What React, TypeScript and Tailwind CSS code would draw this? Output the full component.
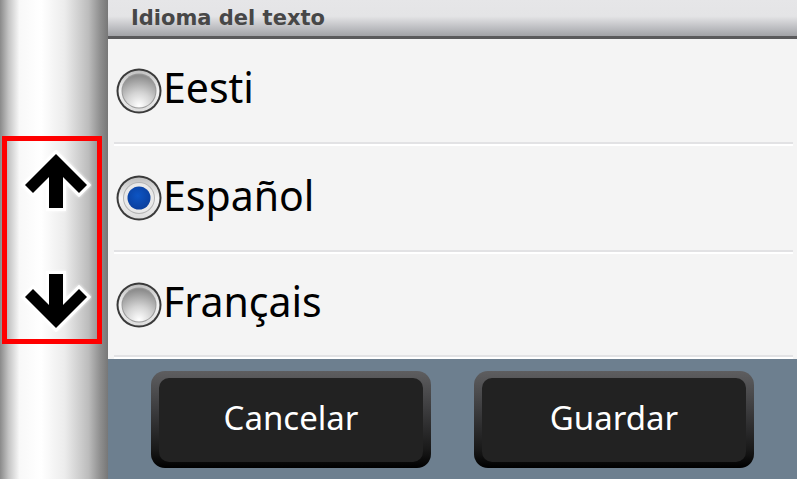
import React from 'react';

const languages = [
  { label: 'Eesti', selected: false, rowClass: 'h-[103px]' },
  { label: 'Español', selected: true, rowClass: 'h-[104px]' },
  { label: 'Français', selected: false, rowClass: 'h-[101px]' },
];

function Radio({ selected, id }: { selected: boolean; id: string }) {
  return (
    <svg width="46" height="46" viewBox="0 0 46 46" className="shrink-0">
      <defs>
        <linearGradient id={`ring-${id}`} x1="0" y1="0" x2="0" y2="1">
          <stop offset="0" stopColor="#bfbfbf" />
          <stop offset="0.5" stopColor="#f4f4f4" />
          <stop offset="1" stopColor="#dcdcdc" />
        </linearGradient>
        <radialGradient id={`ball-${id}`} cx="0.5" cy="0.95" r="0.9">
          <stop offset="0" stopColor="#ffffff" />
          <stop offset="0.45" stopColor="#d4d4d4" />
          <stop offset="1" stopColor="#8e8e8e" />
        </radialGradient>
        <radialGradient id={`dot-${id}`} cx="0.45" cy="0.4" r="0.6">
          <stop offset="0" stopColor="#0d55c4" />
          <stop offset="1" stopColor="#0a3f9e" />
        </radialGradient>
      </defs>
      <circle cx="23" cy="23" r="22.5" fill="#3a3a3a" />
      <circle cx="23" cy="23" r="20.5" fill={`url(#ring-${id})`} />
      {selected ? (
        <>
          <circle cx="23" cy="23" r="16" fill="#b5b5b5" />
          <circle cx="23" cy="23" r="15" fill="#e9e9e9" />
          <circle cx="23" cy="23" r="11.5" fill={`url(#dot-${id})`} />
        </>
      ) : (
        <>
          <circle cx="23" cy="23" r="17.5" fill="#9a9a9a" />
          <circle cx="23" cy="23" r="16.5" fill={`url(#ball-${id})`} />
        </>
      )}
    </svg>
  );
}

function Arrow({ down }: { down?: boolean }) {
  return (
    <svg width="72" height="64" viewBox="0 0 72 64" className={down ? 'rotate-180' : ''}>
      <polygon
        points="36,4 67,35 59,43 43,27 43,58 29,58 29,27 13,43 5,35"
        fill="#000"
        stroke="#fff"
        strokeWidth="6"
        strokeLinejoin="miter"
        paintOrder="stroke"
        style={{ filter: 'drop-shadow(0 0 1.5px #fff)' }}
      />
    </svg>
  );
}

export default function App() {
  return (
    <div className="w-[797px] h-[479px] flex overflow-hidden font-['Noto_Sans',sans-serif]">
      {/* Scroll rail */}
      <div className="w-[108px] h-full flex items-center justify-start pl-[2px] bg-[linear-gradient(to_right,#8a8a8a_0%,#c4c4c4_8%,#f8f8f8_18%,#ffffff_38%,#ececec_60%,#bcbcbc_82%,#8e8e8e_93%,#777777_100%)]">
        <div className="w-[100px] h-[208px] border-[5px] border-[#ff0000] flex flex-col items-start justify-between pl-[13px] pt-[9px] pb-[7px]">
          <Arrow />
          <Arrow down />
        </div>
      </div>

      <div className="flex-1 flex flex-col">
        {/* Header */}
        <div className="h-[39px] flex flex-col">
          <div className="h-[36px] flex items-center pl-[23px] bg-[linear-gradient(to_bottom,#e6e6e8_0%,#e4e4e6_45%,#b4b5b9_85%,#a2a3a7_100%)]">
            <span className="font-['DejaVu_Sans',sans-serif] font-bold text-[21px] text-[#474747] leading-none">
              Idioma del texto
            </span>
          </div>
          <div className="h-[3px] bg-[#5a5a5c]" />
        </div>

        {/* List */}
        <div className="h-[320px] bg-[#f4f4f4] flex flex-col">
          {languages.map((lang, i) => (
            <div key={lang.label} className="flex flex-col">
              <div className={`${lang.rowClass} flex items-center pl-[8px]`}>
                <Radio selected={lang.selected} id={String(i)} />
                <span className="text-[41px] text-black leading-none pl-[1px] pb-[6px]">{lang.label}</span>
              </div>
              <div className="ml-[6px] mr-[4px] h-[4px] flex flex-col">
                <div className="h-[2px] bg-[#e2e2e4]" />
                <div className="h-[2px] bg-white" />
              </div>
            </div>
          ))}
        </div>

        {/* Buttons */}
        <div className="flex-1 bg-[#6d7f8f] flex justify-center gap-[43px] pt-[12px]">
          {['Cancelar', 'Guardar'].map((label) => (
            <div
              key={label}
              className="w-[280px] h-[97px] rounded-[14px] pt-[7px] px-[8px] pb-[6px] bg-[linear-gradient(to_bottom,#5e5e60_0%,#3c3c3e_40%,#1a1a1a_80%,#000_100%)]"
            >
              <div className="w-full h-full rounded-[10px] bg-[#222222] flex items-center justify-center pb-[6px]">
                <span className="text-[33px] text-white leading-none">{label}</span>
              </div>
            </div>
          ))}
        </div>
      </div>
    </div>
  );
}
